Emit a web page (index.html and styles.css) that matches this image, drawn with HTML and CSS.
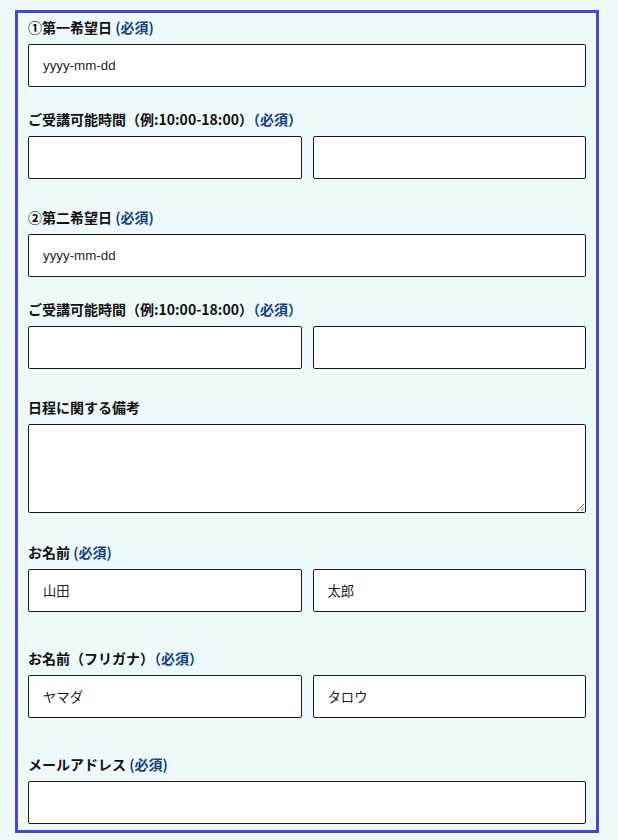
FILE: index.html
```html
<!DOCTYPE html>
<html lang="ja">
<head>
  <meta charset="UTF-8" />
  <title>お申し込みフォーム</title>
  <meta name="viewport" content="width=device-width, initial-scale=1.0"/>
  <link rel="stylesheet" href="styles.css">
</head>
<body>

<form class="form-box">
  <div class="field field--date">
    <label class="field-label">①第一希望日 <span class="req">(必須)</span></label>
    <input type="text" class="text-input" value="yyyy-mm-dd">
  </div>

  <div class="field field--time">
    <label class="field-label">ご受講可能時間（例:10:00-18:00）<span class="req">（必須）</span></label>
    <div class="pair">
      <input type="text" class="text-input">
      <input type="text" class="text-input">
    </div>
  </div>

  <div class="field field--date">
    <label class="field-label">②第二希望日 <span class="req">(必須)</span></label>
    <input type="text" class="text-input" value="yyyy-mm-dd">
  </div>

  <div class="field field--time">
    <label class="field-label">ご受講可能時間（例:10:00-18:00）<span class="req">（必須）</span></label>
    <div class="pair">
      <input type="text" class="text-input">
      <input type="text" class="text-input">
    </div>
  </div>

  <div class="field field--note">
    <label class="field-label">日程に関する備考</label>
    <textarea class="text-area"></textarea>
  </div>

  <div class="field field--name">
    <label class="field-label">お名前 <span class="req">(必須)</span></label>
    <div class="pair">
      <input type="text" class="text-input" value="山田">
      <input type="text" class="text-input" value="太郎">
    </div>
  </div>

  <div class="field field--name">
    <label class="field-label">お名前（フリガナ）<span class="req">（必須）</span></label>
    <div class="pair">
      <input type="text" class="text-input" value="ヤマダ">
      <input type="text" class="text-input" value="タロウ">
    </div>
  </div>

  <div class="field">
    <label class="field-label">メールアドレス <span class="req">(必須)</span></label>
    <input type="text" class="text-input">
  </div>
</form>

</body>
</html>
```

FILE: styles.css
```css
body {
  margin: 0;
  background: #eef9fb;
  font-family: "Noto Sans CJK JP", "Noto Sans", sans-serif;
  color: #111;
}

.form-box {
  width: 558px;
  margin: 10px 0 0 15px;
  padding: 4px 10px 6px;
  border: 3px solid #4649cf;
}

.field {
  margin: 0;
}

.field--date {
  margin-bottom: 22px;
}

.field--time {
  margin-bottom: 28px;
}

.field--note {
  margin-bottom: 29px;
}

.field--name {
  margin-bottom: 36px;
}

.field-label {
  display: block;
  font-size: 14px;
  font-weight: bold;
  line-height: 20px;
  margin-bottom: 7px;
}

.req {
  color: #183f7f;
}

.pair {
  display: grid;
  grid-template-columns: 1fr 1fr;
  gap: 11px;
}

.text-input,
.text-area {
  display: block;
  width: 100%;
  box-sizing: border-box;
  border: 1px solid #1a1a1a;
  border-radius: 2px;
  background: #fff;
  font-family: "Liberation Sans", "Noto Sans CJK JP", sans-serif;
  font-size: 13.333px;
  color: #1e1e1e;
  margin: 0;
}

.text-input {
  height: 43px;
  padding: 0 14px;
}

.text-area {
  height: 89px;
  padding: 8px 14px;
}
```
